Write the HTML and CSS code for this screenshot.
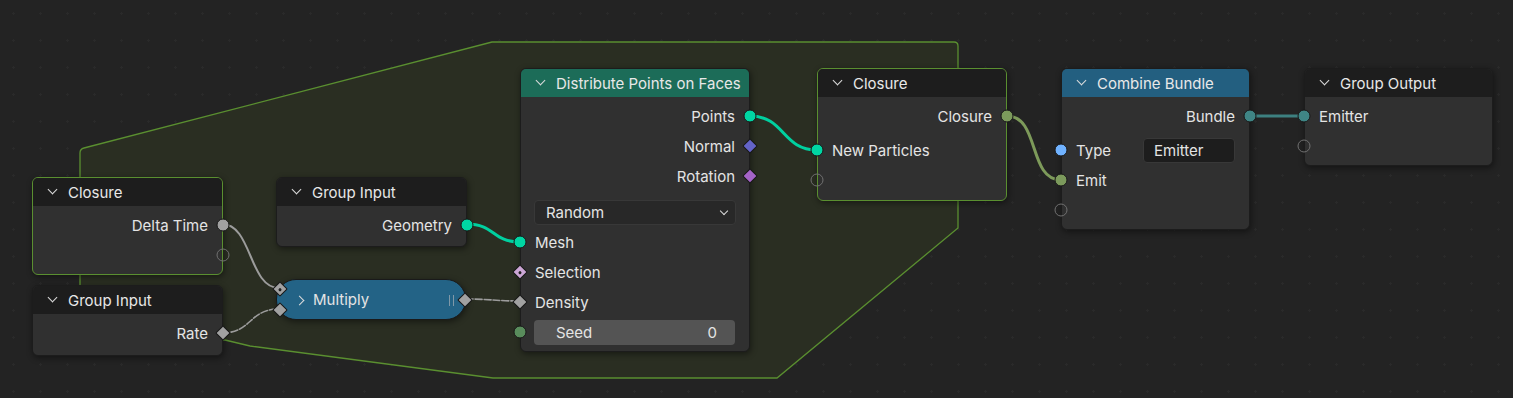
FILE: index.html
```html
<!DOCTYPE html>
<html lang="en">
<head>
    <meta charset="UTF-8">
    <title>Geometry Nodes</title>
    <link rel="stylesheet" href="styles.css">
</head>
<body>
    <div class="editor">
        <svg class="layer" width="1513" height="398">
            <!-- closure zone -->
            <path class="zone" d="M225,340 L250,346 L493,378 L777,378 L958,228 L958,46 Q958,42 954,42 L492,42 L84,148 Q80,149 80,153 L80,340 Z"/>
            <!-- links -->
            <path class="link grey" d="M222,224 C252,224 249,288 279,288"/>
            <path class="link grey dash" d="M222,333 C252,333 249,309 279,309"/>
            <path class="link grey dash" d="M466,299 C490,299 496,301 520,301"/>
            <path class="link geo" d="M467,224 C495,224 492,242 520,242"/>
            <path class="link geo" d="M750,116 C785,116 782,150 817,150"/>
            <path class="link closure" d="M1007,116 C1040,116 1028,180 1061,180"/>
            <path class="link bundle" d="M1250,116 L1304,116"/>
        </svg>

        <!-- closure input -->
        <div class="node zoned n-closure-in">
            <div class="head"><span class="chev"></span>Closure</div>
            <div class="body">
                <div class="row out">Delta Time<i class="sock float"></i></div>
                <div class="row out"><i class="sock empty"></i></div>
            </div>
        </div>

        <div class="node n-rate">
            <div class="head"><span class="chev"></span>Group Input</div>
            <div class="body">
                <div class="row out">Rate<i class="sock dia float"></i></div>
            </div>
        </div>

        <div class="node n-geo">
            <div class="head"><span class="chev"></span>Group Input</div>
            <div class="body">
                <div class="row out">Geometry<i class="sock geo"></i></div>
            </div>
        </div>

        <div class="multiply">
            <i class="sock dia float dot top-in"></i>
            <i class="sock dia float bot-in"></i>
            <span class="chev right"></span>Multiply
            <span class="grip"></span>
            <i class="sock dia float m-out"></i>
        </div>

        <div class="node n-distribute">
            <div class="head green"><span class="chev"></span>Distribute Points on Faces</div>
            <div class="body">
                <div class="row out">Points<i class="sock geo"></i></div>
                <div class="row out">Normal<i class="sock dia vec"></i></div>
                <div class="row out">Rotation<i class="sock dia rot"></i></div>
                <div class="row select-row"><div class="select">Random<span class="chev small"></span></div></div>
                <div class="row in">Mesh<i class="sock geo"></i></div>
                <div class="row in">Selection<i class="sock dia bool dot"></i></div>
                <div class="row in">Density<i class="sock dia float"></i></div>
                <div class="row in"><div class="num"><span>Seed</span><span>0</span></div><i class="sock int"></i></div>
            </div>
        </div>

        <div class="node zoned n-closure-out">
            <div class="head"><span class="chev"></span>Closure</div>
            <div class="body">
                <div class="row out">Closure<i class="sock clo"></i></div>
                <div class="spacer"></div>
                <div class="row in">New Particles<i class="sock geo"></i></div>
                <div class="row in"><i class="sock empty"></i></div>
            </div>
        </div>

        <div class="node n-combine">
            <div class="head blue"><span class="chev"></span>Combine Bundle</div>
            <div class="body">
                <div class="row out">Bundle<i class="sock bun"></i></div>
                <div class="spacer"></div>
                <div class="row in">Type<div class="text-field">Emitter</div><i class="sock str"></i></div>
                <div class="row in">Emit<i class="sock clo"></i></div>
                <div class="row in"><i class="sock empty"></i></div>
            </div>
        </div>

        <div class="node n-output">
            <div class="head"><span class="chev"></span>Group Output</div>
            <div class="body">
                <div class="row in">Emitter<i class="sock bun"></i></div>
                <div class="row in"><i class="sock empty"></i></div>
            </div>
        </div>
    </div>
</body>
</html>
```

FILE: styles.css
```css
*{
    margin: 0;
    padding: 0;
    box-sizing: border-box;
}
body{
    background: #232323;
    font-family: Inter, "Noto Sans", sans-serif;
    font-size: 15px;
    color: #e4e4e4;
    overflow: hidden;
}
.editor{
    position: relative;
    width: 1513px;
    height: 398px;
    background-color: #232323;
    background-image: radial-gradient(circle, #2a2a2a 1px, transparent 1.3px);
    background-size: 27px 27px;
}
.layer{
    position: absolute;
    left: 0;
    top: 0;
}
.zone{
    fill: #2a2e22;
    stroke: #5a8f30;
    stroke-width: 1.3;
}
.link{
    fill: none;
    stroke-linecap: round;
}
.link.grey{ stroke: #9c9c9c; stroke-width: 2; }
.link.dash{ stroke-width: 1.6; stroke-dasharray: 7 2; }
.link.geo{ stroke: #00d0a0; stroke-width: 3; }
.link.closure{ stroke: #7d9a5a; stroke-width: 3; }
.link.bundle{ stroke: #3d8080; stroke-width: 3; }

/* nodes */
.node{
    position: absolute;
    background: #303030;
    border: 1px solid #1c1c1c;
    border-radius: 6px;
    box-shadow: 1px 2px 6px rgba(0,0,0,0.45);
}
.node.zoned{
    border-color: #5a8f30;
}
.head{
    height: 28px;
    display: flex;
    align-items: center;
    padding-left: 14px;
    gap: 11px;
    background: #1d1d1d;
    border-radius: 5px 5px 0 0;
    color: #e8e8e8;
    white-space: nowrap;
}
.head.green{ background: #1c6c58; }
.head.blue{ background: #235f80; }
.chev{
    width: 10px;
    height: 10px;
    position: relative;
    flex: none;
}
.chev::before{
    content: "";
    position: absolute;
    left: 1.5px;
    top: -1px;
    width: 6px;
    height: 6px;
    border-right: 1.5px solid #dcdcdc;
    border-bottom: 1.5px solid #dcdcdc;
    transform: rotate(45deg);
}
.chev.right::before{
    transform: rotate(-45deg);
    left: -1px;
    top: 2px;
}
.chev.small{
    width: 8px;
    height: 8px;
}
.chev.small::before{
    width: 5px;
    height: 5px;
    border-width: 1.3px;
}
.body{
    padding: 4px 0 5px;
}
.row{
    position: relative;
    height: 30px;
    display: flex;
    align-items: center;
    padding: 0 14px;
    white-space: nowrap;
}
.row.out{ justify-content: flex-end; }
.spacer{ height: 4px; }

/* sockets */
.sock{
    position: absolute;
    top: 50%;
    width: 13px;
    height: 13px;
    border-radius: 50%;
    border: 1px solid #181818;
    transform: translate(-50%, -50%);
}
.row.out .sock{ left: calc(100% + 1px); }
.row.in .sock{ left: -1px; }
.sock.dia{
    width: 11px;
    height: 11px;
    border-radius: 1px;
    transform: translate(-50%, -50%) rotate(45deg);
}
.sock.dot::after{
    content: "";
    position: absolute;
    left: 50%;
    top: 50%;
    width: 3px;
    height: 3px;
    background: #202020;
    border-radius: 50%;
    transform: translate(-50%, -50%);
}
.sock.empty{
    background: transparent;
    border: 1.5px solid #707070;
}
.float{ background: #a1a1a1; }
.geo{ background: #00d6a3; }
.vec{ background: #6363c7; }
.rot{ background: #a463c7; }
.bool{ background: #cca6d6; }
.int{ background: #598c5c; }
.clo{ background: #7c9a5c; }
.bun{ background: #3f8585; }
.str{ background: #70b2ff; }

/* widgets */
.select-row{
    height: 36px;
    align-items: flex-start;
    padding: 9px 13px 0;
}
.select{
    flex: 1;
    height: 25px;
    display: flex;
    align-items: center;
    justify-content: space-between;
    padding: 0 8px 0 11px;
    background: #282828;
    border: 1px solid #383838;
    border-radius: 4px;
}
.num{
    flex: 1;
    height: 25px;
    margin-left: -1px;
    display: flex;
    align-items: center;
    justify-content: space-between;
    padding: 0 18px 0 22px;
    background: #545454;
    border-radius: 4px;
}
.text-field{
    margin-left: auto;
    width: 92px;
    height: 25px;
    display: flex;
    align-items: center;
    padding-left: 10px;
    background: #1d1d1d;
    border: 1px solid #383838;
    border-radius: 4px;
}

/* collapsed multiply */
.multiply{
    position: absolute;
    left: 276px;
    top: 279px;
    width: 190px;
    height: 41px;
    display: flex;
    align-items: center;
    gap: 6px;
    padding-left: 20px;
    background: #236386;
    border: 1px solid #1a1a1a;
    border-radius: 20px;
    box-shadow: 1px 2px 6px rgba(0,0,0,0.45);
}
.grip{
    position: absolute;
    right: 11px;
    top: 15px;
    width: 5px;
    height: 11px;
    border-left: 1.5px solid #7f98a8;
    border-right: 1.5px solid #7f98a8;
}
.multiply .sock{ left: 3px; }
.multiply .top-in{ top: 9px; }
.multiply .bot-in{ top: 30px; }
.multiply .m-out{ left: auto; right: -11px; top: 50%; }

.n-closure-in{ left: 32px; top: 177px; width: 191px; height: 98px; }
.n-rate{ left: 32px; top: 285px; width: 191px; height: 71px; }
.n-geo{ left: 276px; top: 177px; width: 191px; height: 70px; }
.n-distribute{ left: 520px; top: 68px; width: 230px; height: 284px; }
.n-closure-out{ left: 817px; top: 68px; width: 190px; height: 133px; }
.n-combine{ left: 1061px; top: 68px; width: 189px; height: 162px; }
.n-output{ left: 1304px; top: 68px; width: 189px; height: 98px; }
```
